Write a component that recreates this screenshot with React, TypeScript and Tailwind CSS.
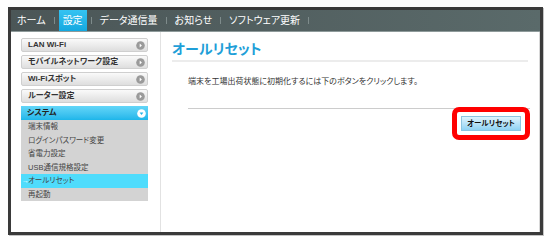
import React from "react";

const tabs = [
  { label: "ホーム", active: false },
  { label: "設定", active: true },
  { label: "データ通信量", active: false },
  { label: "お知らせ", active: false },
  { label: "ソフトウェア更新", active: false },
];

const menu = ["LAN Wi-Fi", "モバイルネットワーク設定", "Wi-Fiスポット", "ルーター設定"];

const subMenu = ["端末情報", "ログインパスワード変更", "省電力設定", "USB通信規格設定", "オールリセット", "再起動"];

function ArrowDot({ open }: { open?: boolean }) {
  if (open) {
    return (
      <svg width="9" height="9" viewBox="0 0 9 9">
        <circle cx="4.5" cy="4.5" r="4.3" fill="#ffffff" />
        <path d="M2.6 3.6 L6.4 3.6 L4.5 5.9 Z" fill="#22b4e6" />
      </svg>
    );
  }
  return (
    <svg width="9" height="9" viewBox="0 0 9 9">
      <circle cx="4.5" cy="4.5" r="4.3" fill="#9a9a9a" />
      <path d="M3.7 2.6 L5.9 4.5 L3.7 6.4 Z" fill="#ffffff" />
    </svg>
  );
}

export default function App() {
  return (
    <div className="w-[552px] h-[243px] bg-white pt-[7px] pl-[8px] font-['Liberation_Sans','Noto_Sans_CJK_JP',sans-serif] [font-feature-settings:'palt']">
      <div className="w-[535px] h-[228px] border-[3px] border-[#3a3a3a] shadow-[1px_1px_0_#c4c4c4] flex flex-col">
        {/* top nav */}
        <div className="h-[22px] shrink-0 flex items-stretch bg-gradient-to-r from-[#4b5657] to-[#5a6a6a] border-b border-[#8e9a9a] pl-[2px]">
          {tabs.map((t) => (
            <div key={t.label} className="flex items-center">
              <div
                className={`h-full flex items-center px-[4px] text-[10px] text-white ${
                  t.active ? "bg-gradient-to-b from-[#34c3f2] to-[#12a8e0]" : ""
                }`}
              >
                {t.label}
              </div>
              <span className="mx-[4px] w-px h-[7px] bg-[#7e8b8b]" />
            </div>
          ))}
        </div>

        <div className="flex-1 flex bg-white">
          {/* side menu */}
          <div className="w-[150px] shrink-0 border-r border-[#e2e2e2] pl-[10px] pr-[12px] pt-[6px]">
            <div className="flex flex-col gap-[3px]">
              {menu.map((m) => (
                <div
                  key={m}
                  className="h-[14px] flex items-center justify-between pl-[6px] pr-[2px] rounded-[2px] border border-[#cfcfcf] bg-gradient-to-b from-[#fafafa] to-[#dedede] text-[8px] font-bold text-[#333]"
                >
                  <span>{m}</span>
                  <ArrowDot />
                </div>
              ))}
              <div>
                <div className="h-[14px] flex items-center justify-between pl-[6px] pr-[2px] bg-gradient-to-b from-[#62d6f8] to-[#1cb6ea] text-[8px] font-bold text-[#222]">
                  <span>システム</span>
                  <ArrowDot open />
                </div>
                <div className="bg-[#d3d3d3] flex flex-col">
                  {subMenu.map((s) => (
                    <div
                      key={s}
                      className={`h-[13.5px] flex items-center pl-[7px] text-[7.5px] text-[#444] relative ${
                        s === "オールリセット" ? "bg-[#4fdcfc] text-[#222]" : ""
                      }`}
                    >
                      {s === "オールリセット" && (
                        <span className="absolute left-[1px] text-[7px] text-white">→</span>
                      )}
                      {s}
                    </div>
                  ))}
                </div>
              </div>
            </div>
          </div>

          {/* content */}
          <div className="flex-1 border-r border-[#d8d8d8] px-[11px] pt-[9px]">
            <h2 className="text-[14px] leading-[16px] font-bold text-[#1f9fd8] pb-[3px] border-b-2 border-[#ececec]">
              オールリセット
            </h2>
            <p className="pl-[16px] mt-[14px] text-[8px] text-[#333]">
              端末を工場出荷状態に初期化するには下のボタンをクリックします。
            </p>
            <div className="ml-[16px] mr-[-2px] mt-[20px] border-t border-[#cccccc]" />
            <div className="flex justify-end mr-[-2px] mt-[-2px]">
              <div className="relative border-[5px] border-[#ff0000] rounded-[7px] bg-white p-[4px]">
                <button className="w-[60px] h-[15px] flex items-center justify-center border border-[#8cc4e0] bg-gradient-to-b from-[#dff3fd] to-[#8fd2f3] text-[7.5px] font-bold text-[#111]">
                  オールリセット
                </button>
              </div>
            </div>
          </div>
        </div>
      </div>
    </div>
  );
}
